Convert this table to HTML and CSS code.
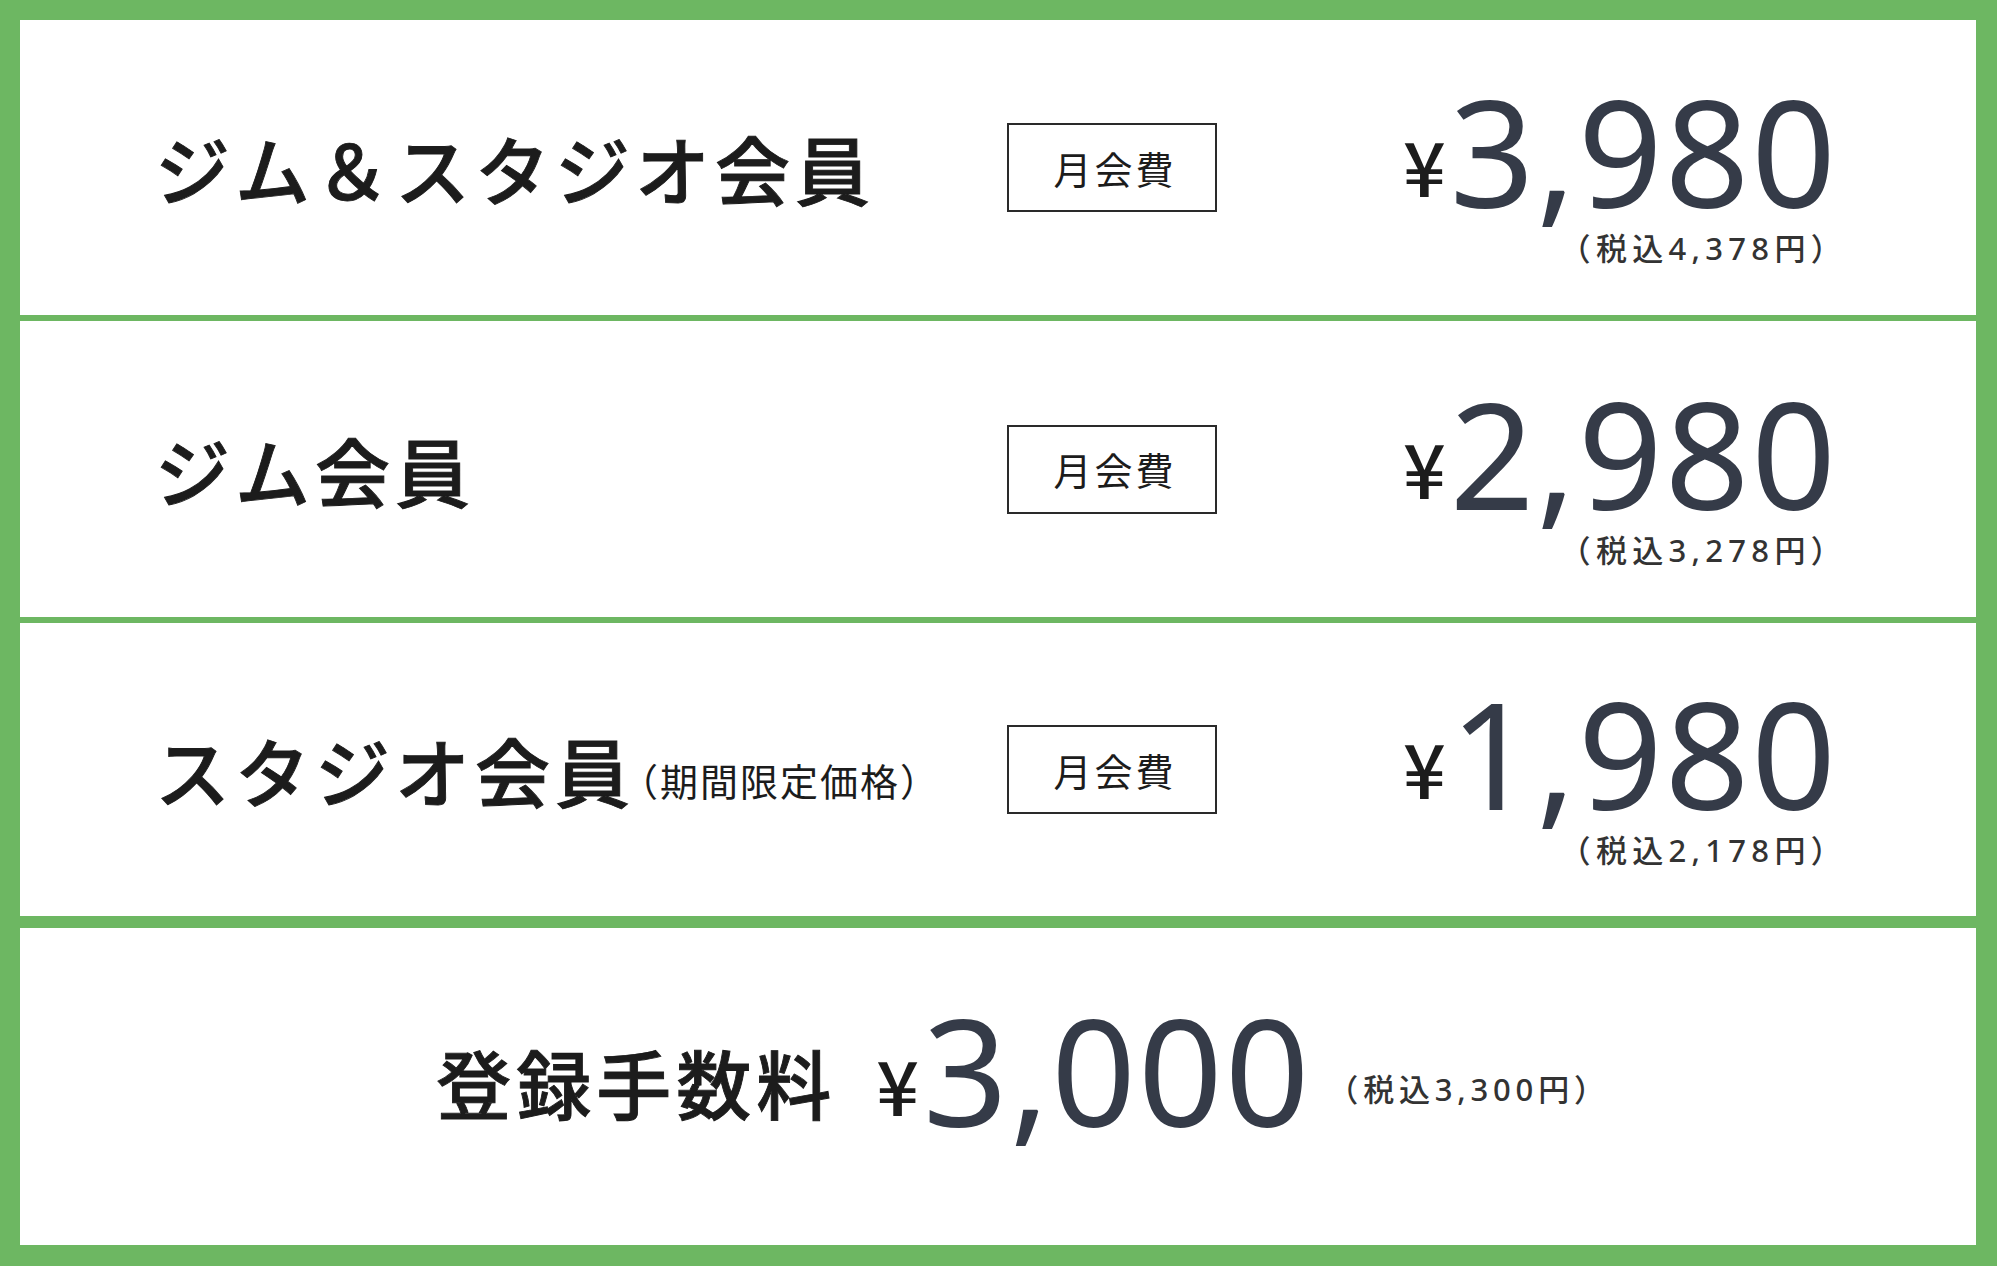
FILE: index.html
```html
<!DOCTYPE html>
<html lang="ja">
<head>
<meta charset="utf-8">
<title>料金プラン</title>
<link rel="stylesheet" href="styles.css">
</head>
<body>
<div class="board">
  <div class="plan">
    <div class="plan-name">ジム＆スタジオ会員</div>
    <div class="badge">月会費</div>
    <div class="price">
      <div class="amount"><span class="yen">¥</span><span class="num">3,980</span></div>
      <div class="tax">（税込4,378円）</div>
    </div>
  </div>
  <div class="plan">
    <div class="plan-name">ジム会員</div>
    <div class="badge">月会費</div>
    <div class="price">
      <div class="amount"><span class="yen">¥</span><span class="num">2,980</span></div>
      <div class="tax">（税込3,278円）</div>
    </div>
  </div>
  <div class="plan plan-last">
    <div class="plan-name">スタジオ会員<span class="note">（期間限定価格）</span></div>
    <div class="badge">月会費</div>
    <div class="price">
      <div class="amount"><span class="yen">¥</span><span class="num">1,980</span></div>
      <div class="tax">（税込2,178円）</div>
    </div>
  </div>
  <div class="fee">
    <div class="fee-line"><span class="fee-name">登録手数料</span><span class="yen">¥</span><span class="num">3,000</span><span class="tax fee-tax">（税込3,300円）</span></div>
  </div>
</div>
</body>
</html>
```

FILE: styles.css
```css
* { box-sizing: border-box; }

html, body {
  margin: 0;
  padding: 0;
  background: #ffffff;
}

.board {
  width: 1997px;
  height: 1266px;
  border-style: solid;
  border-color: #6db762;
  border-width: 20px 21px 21px 20px;
  display: grid;
  grid-template-rows: 301px 302px 305px 1fr;
  font-family: "Noto Sans CJK JP", sans-serif;
  color: #1c1c1c;
}

.plan {
  display: grid;
  grid-template-columns: 852px 210px 1fr;
  align-items: center;
  padding: 0 138px 0 135px;
  border-bottom: 6px solid #6db762;
}

.plan-last {
  border-bottom-width: 12px;
}

.plan-name {
  font-size: 75px;
  font-weight: 500;
  letter-spacing: 5px;
  line-height: 1;
  white-space: nowrap;
  -webkit-text-stroke: 0.9px #1c1c1c;
}

.note {
  font-size: 38px;
  font-weight: 400;
  letter-spacing: 2px;
  vertical-align: 6px;
  margin-left: -15px;
  -webkit-text-stroke: 0;
}

.badge {
  width: 210px;
  height: 89px;
  border: 2px solid #2a2a2a;
  display: flex;
  align-items: center;
  justify-content: center;
  font-size: 38px;
  letter-spacing: 3px;
  padding-left: 6px;
  line-height: 1;
}

.price {
  display: flex;
  flex-direction: column;
  align-items: flex-end;
  margin-top: 6px;
}

.amount {
  font-family: "Noto Sans", sans-serif;
  font-size: 148px;
  line-height: 1;
  white-space: nowrap;
}

.yen {
  font-family: "Noto Sans CJK JP", sans-serif;
  font-size: 75px;
  font-weight: 500;
  color: #1c1c1c;
  line-height: 1;
  vertical-align: 11px;
  margin-right: 4px;
}

.num {
  font-family: "Noto Sans", sans-serif;
  font-size: 148px;
  font-weight: 400;
  color: #353b48;
  letter-spacing: 2px;
  line-height: 1;
}

.tax {
  font-family: "Noto Sans", "Noto Sans CJK JP", sans-serif;
  font-size: 31px;
  font-weight: 500;
  letter-spacing: 5.3px;
  color: #333333;
  line-height: 1;
  margin-top: 8px;
  margin-right: -9px;
  white-space: nowrap;
}

.fee {
  display: flex;
  align-items: center;
  justify-content: center;
  padding: 0 0 34px 50px;
}

.fee-line {
  font-family: "Noto Sans", sans-serif;
  font-size: 148px;
  line-height: 1;
  white-space: nowrap;
}

.fee-name {
  font-family: "Noto Sans CJK JP", sans-serif;
  font-size: 75px;
  font-weight: 500;
  letter-spacing: 5px;
  line-height: 1;
  vertical-align: 13px;
  margin-right: 40px;
  -webkit-text-stroke: 0.9px #1c1c1c;
}

.fee-tax {
  vertical-align: 26px;
  margin: 0 0 0 16px;
  letter-spacing: 4.8px;
}
```
